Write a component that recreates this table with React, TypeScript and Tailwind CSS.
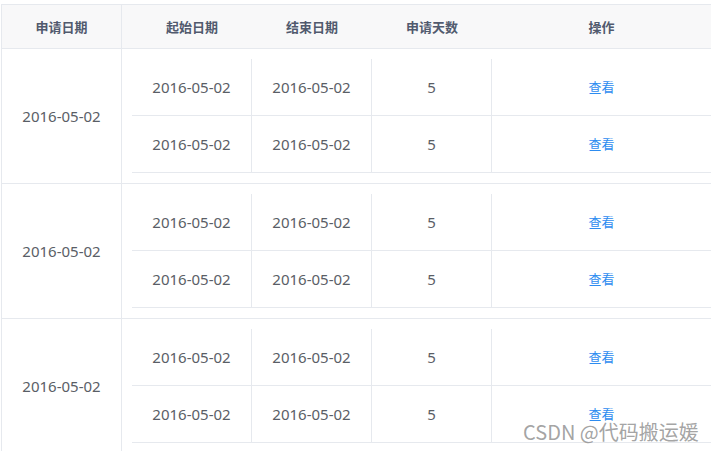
import React from "react";

const cjk = { fontFamily: '"Noto Sans CJK SC", "Noto Sans", sans-serif' };
const num = { fontFamily: '"Noto Sans", "Noto Sans CJK SC", sans-serif' };

function InnerRow() {
  return (
    <div className="flex h-[57px] border-b border-[#e6e9ee] items-stretch">
      <div className="w-[120px] border-r border-[#e6e9ee] flex items-center justify-center text-[15px] text-[#5a5e66]" style={num}>
        2016-05-02
      </div>
      <div className="w-[120px] border-r border-[#e6e9ee] flex items-center justify-center text-[15px] text-[#5a5e66]" style={num}>
        2016-05-02
      </div>
      <div className="w-[120px] border-r border-[#e6e9ee] flex items-center justify-center text-[15px] text-[#5a5e66]" style={num}>
        5
      </div>
      <div className="flex-1 flex items-center justify-center text-[13px] text-[#2d8cf0]" style={cjk}>
        查看
      </div>
    </div>
  );
}

function Group() {
  return (
    <div className="flex border-b border-[#e6e9ee]">
      <div className="w-[120px] border-r border-[#e6e9ee] flex items-center justify-center text-[15px] text-[#5a5e66]" style={num}>
        2016-05-02
      </div>
      <div className="flex-1 p-[10px]">
        <InnerRow />
        <InnerRow />
      </div>
    </div>
  );
}

export default function App() {
  return (
    <div className="relative w-[711px] h-[451px] overflow-hidden bg-white">
      <div className="pt-[4px] pl-[1px]">
        <div className="w-[720px] border-l border-t border-[#e6e9ee]">
          <div className="flex h-[44px] border-b border-[#e6e9ee] bg-[#f8f8f9] text-[13px] font-bold text-[#515a6e]" style={cjk}>
            <div className="w-[120px] border-r border-[#e6e9ee] flex items-center justify-center">申请日期</div>
            <div className="flex-1 flex pl-[10px] pr-[10px]">
              <div className="w-[120px] flex items-center justify-center">起始日期</div>
              <div className="w-[120px] flex items-center justify-center">结束日期</div>
              <div className="w-[120px] flex items-center justify-center">申请天数</div>
              <div className="flex-1 flex items-center justify-center">操作</div>
            </div>
          </div>
          <Group />
          <Group />
          <Group />
        </div>
      </div>
      <div
        className="absolute left-[523px] top-[418px] text-[20px] leading-[28px] text-[#8c8c8c]/80 whitespace-nowrap"
        style={cjk}
      >
        CSDN @代码搬运媛
      </div>
    </div>
  );
}
